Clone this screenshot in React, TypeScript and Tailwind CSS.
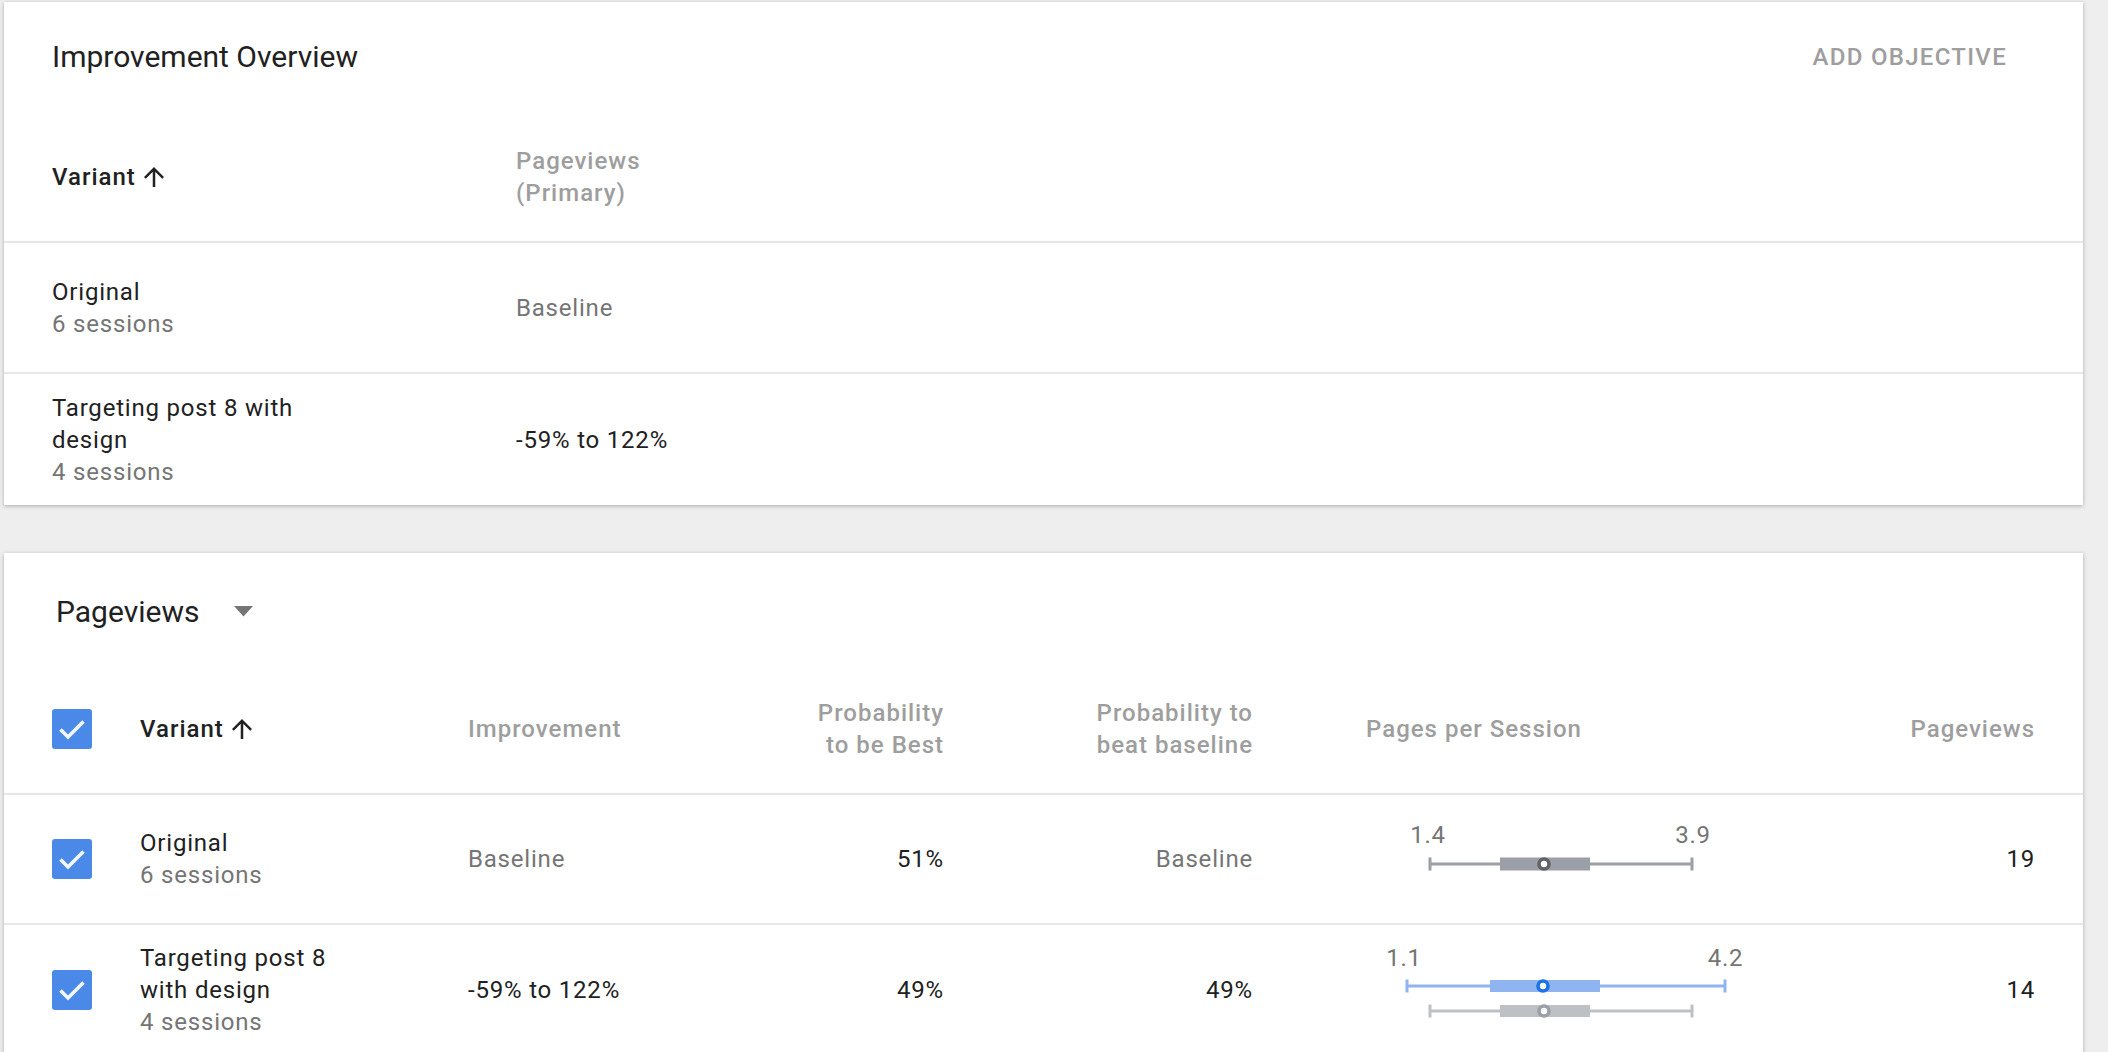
import React from "react";

const CheckBox = () => (
  <svg width="40" height="40" viewBox="0 0 40 40" className="block shrink-0">
    <rect x="0" y="0" width="40" height="40" rx="3" fill="#4a89e8" />
    <polyline
      points="8.5,20.5 16,28 31.5,12.5"
      fill="none"
      stroke="#f2f6fd"
      strokeWidth="3.6"
    />
  </svg>
);

const ArrowUp = () => (
  <svg width="30" height="30" viewBox="0 0 24 24" className="ml-[3px] shrink-0">
    <path
      fill="#212121"
      d="M4 12l1.41 1.41L11 7.83V20h2V7.83l5.58 5.59L20 12l-8-8-8 8z"
    />
  </svg>
);

const DropTriangle = () => (
  <svg width="19" height="11" viewBox="0 0 19 11" className="ml-[35px] shrink-0">
    <polygon points="0,0 19,0 9.5,10.5" fill="#757575" />
  </svg>
);

type Plot = {
  lo: number;
  hi: number;
  boxLo: number;
  boxHi: number;
  mid: number;
  y: number;
  line: string;
  ring: string;
  boxH: number;
};

const PlotBar = ({ p }: { p: Plot }) => (
  <g>
    <line x1={p.lo} y1={p.y} x2={p.hi} y2={p.y} stroke={p.line} strokeWidth={3.2} />
    <line x1={p.lo} y1={p.y - 6.5} x2={p.lo} y2={p.y + 6.5} stroke={p.line} strokeWidth={3} />
    <line x1={p.hi} y1={p.y - 6.5} x2={p.hi} y2={p.y + 6.5} stroke={p.line} strokeWidth={3} />
    <rect x={p.boxLo} y={p.y - p.boxH / 2} width={p.boxHi - p.boxLo} height={p.boxH} fill={p.line} />
    <circle cx={p.mid} cy={p.y} r={5} fill="#ffffff" stroke={p.ring} strokeWidth={3.6} />
  </g>
);

const labelStyle = {
  fontFamily: "Roboto, sans-serif",
  fontSize: 24,
  fill: "#757575",
};

const PlotOriginal = () => (
  <svg width="400" height="80" viewBox="0 0 400 80" className="block">
    <text x={62} y={24} textAnchor="middle" style={labelStyle}>1.4</text>
    <text x={327} y={24} textAnchor="middle" style={labelStyle}>3.9</text>
    <PlotBar
      p={{ lo: 64, hi: 326, boxLo: 134, boxHi: 224, mid: 178, y: 45, line: "#9aa0a6", ring: "#5f6368", boxH: 13 }}
    />
  </svg>
);

const PlotVariant = () => (
  <svg width="400" height="100" viewBox="0 0 400 100" className="block">
    <text x={38} y={26} textAnchor="middle" style={labelStyle}>1.1</text>
    <text x={359.5} y={26} textAnchor="middle" style={labelStyle}>4.2</text>
    <PlotBar
      p={{ lo: 41, hi: 359, boxLo: 124, boxHi: 234, mid: 177, y: 46, line: "#8fb4f0", ring: "#1a73e8", boxH: 12 }}
    />
    <PlotBar
      p={{ lo: 64, hi: 326, boxLo: 134, boxHi: 224, mid: 178, y: 71, line: "#bdc1c6", ring: "#9aa0a6", boxH: 12 }}
    />
  </svg>
);

const COLS = "grid grid-cols-[88px_328px_232px_244px_309px_537px_245px] items-center px-[48px]";

export default function App() {
  return (
    <div className="w-full h-screen overflow-hidden bg-[#eeeeee] font-[Roboto,sans-serif] text-[24px] leading-[32px] tracking-[0.8px] text-[#212121]">
      <div className="flex flex-col gap-[48px] pl-[4px] pr-[25px] pt-[2px]">
        {/* Improvement Overview card */}
        <div className="bg-white shadow-[0_1px_4px_rgba(0,0,0,0.28)]">
          <div className="h-[110px] flex items-center justify-between pl-[48px] pr-[76px]">
            <div className="text-[30px] tracking-normal text-[#212121]">Improvement Overview</div>
            <div className="text-[24px] font-medium tracking-[1.3px] text-[#9e9e9e]">ADD OBJECTIVE</div>
          </div>
          <div className="h-[131px] grid grid-cols-[464px_1fr] items-center px-[48px] border-b-2 border-[#e8e8e8] tracking-[1px]">
            <div className="flex items-center font-medium text-[#212121]">
              <span>Variant</span>
              <ArrowUp />
            </div>
            <div className="font-medium text-[#9e9e9e]">
              <div>Pageviews</div>
              <div>(Primary)</div>
            </div>
          </div>
          <div className="h-[131px] grid grid-cols-[464px_1fr] items-center px-[48px] border-b-2 border-[#e8e8e8]">
            <div>
              <div className="text-[#212121]">Original</div>
              <div className="text-[#757575]">6 sessions</div>
            </div>
            <div className="text-[#757575]">Baseline</div>
          </div>
          <div className="h-[131px] grid grid-cols-[464px_1fr] items-center px-[48px]">
            <div>
              <div className="text-[#212121] max-w-[300px]">Targeting post 8 with design</div>
              <div className="text-[#757575]">4 sessions</div>
            </div>
            <div className="text-[#212121]">-59% to 122%</div>
          </div>
        </div>

        {/* Pageviews card */}
        <div className="bg-white shadow-[0_1px_4px_rgba(0,0,0,0.28)]">
          <div className="h-[111px] pt-[6px] flex items-center pl-[52px]">
            <span className="text-[30px] tracking-normal text-[#212121]">Pageviews</span>
            <DropTriangle />
          </div>
          <div className={`h-[131px] ${COLS} border-b-2 border-[#e8e8e8] font-medium text-[#9e9e9e] tracking-[1px]`}>
            <div><CheckBox /></div>
            <div className="flex items-center text-[#212121]">
              <span>Variant</span>
              <ArrowUp />
            </div>
            <div>Improvement</div>
            <div className="text-right">
              <div>Probability</div>
              <div>to be Best</div>
            </div>
            <div className="text-right">
              <div>Probability to</div>
              <div>beat baseline</div>
            </div>
            <div className="pl-[113px]">Pages per Session</div>
            <div className="text-right">Pageviews</div>
          </div>
          <div className={`h-[130px] ${COLS} border-b-2 border-[#e8e8e8]`}>
            <div><CheckBox /></div>
            <div>
              <div className="text-[#212121]">Original</div>
              <div className="text-[#757575]">6 sessions</div>
            </div>
            <div className="text-[#757575]">Baseline</div>
            <div className="text-right text-[#212121]">51%</div>
            <div className="text-right text-[#757575]">Baseline</div>
            <div className="pl-[113px]"><PlotOriginal /></div>
            <div className="text-right text-[#212121]">19</div>
          </div>
          <div className={`h-[130px] ${COLS}`}>
            <div><CheckBox /></div>
            <div>
              <div className="text-[#212121] max-w-[220px]">Targeting post 8 with design</div>
              <div className="text-[#757575]">4 sessions</div>
            </div>
            <div className="text-[#212121]">-59% to 122%</div>
            <div className="text-right text-[#212121]">49%</div>
            <div className="text-right text-[#212121]">49%</div>
            <div className="pl-[113px]"><PlotVariant /></div>
            <div className="text-right text-[#212121]">14</div>
          </div>
        </div>
      </div>
    </div>
  );
}
